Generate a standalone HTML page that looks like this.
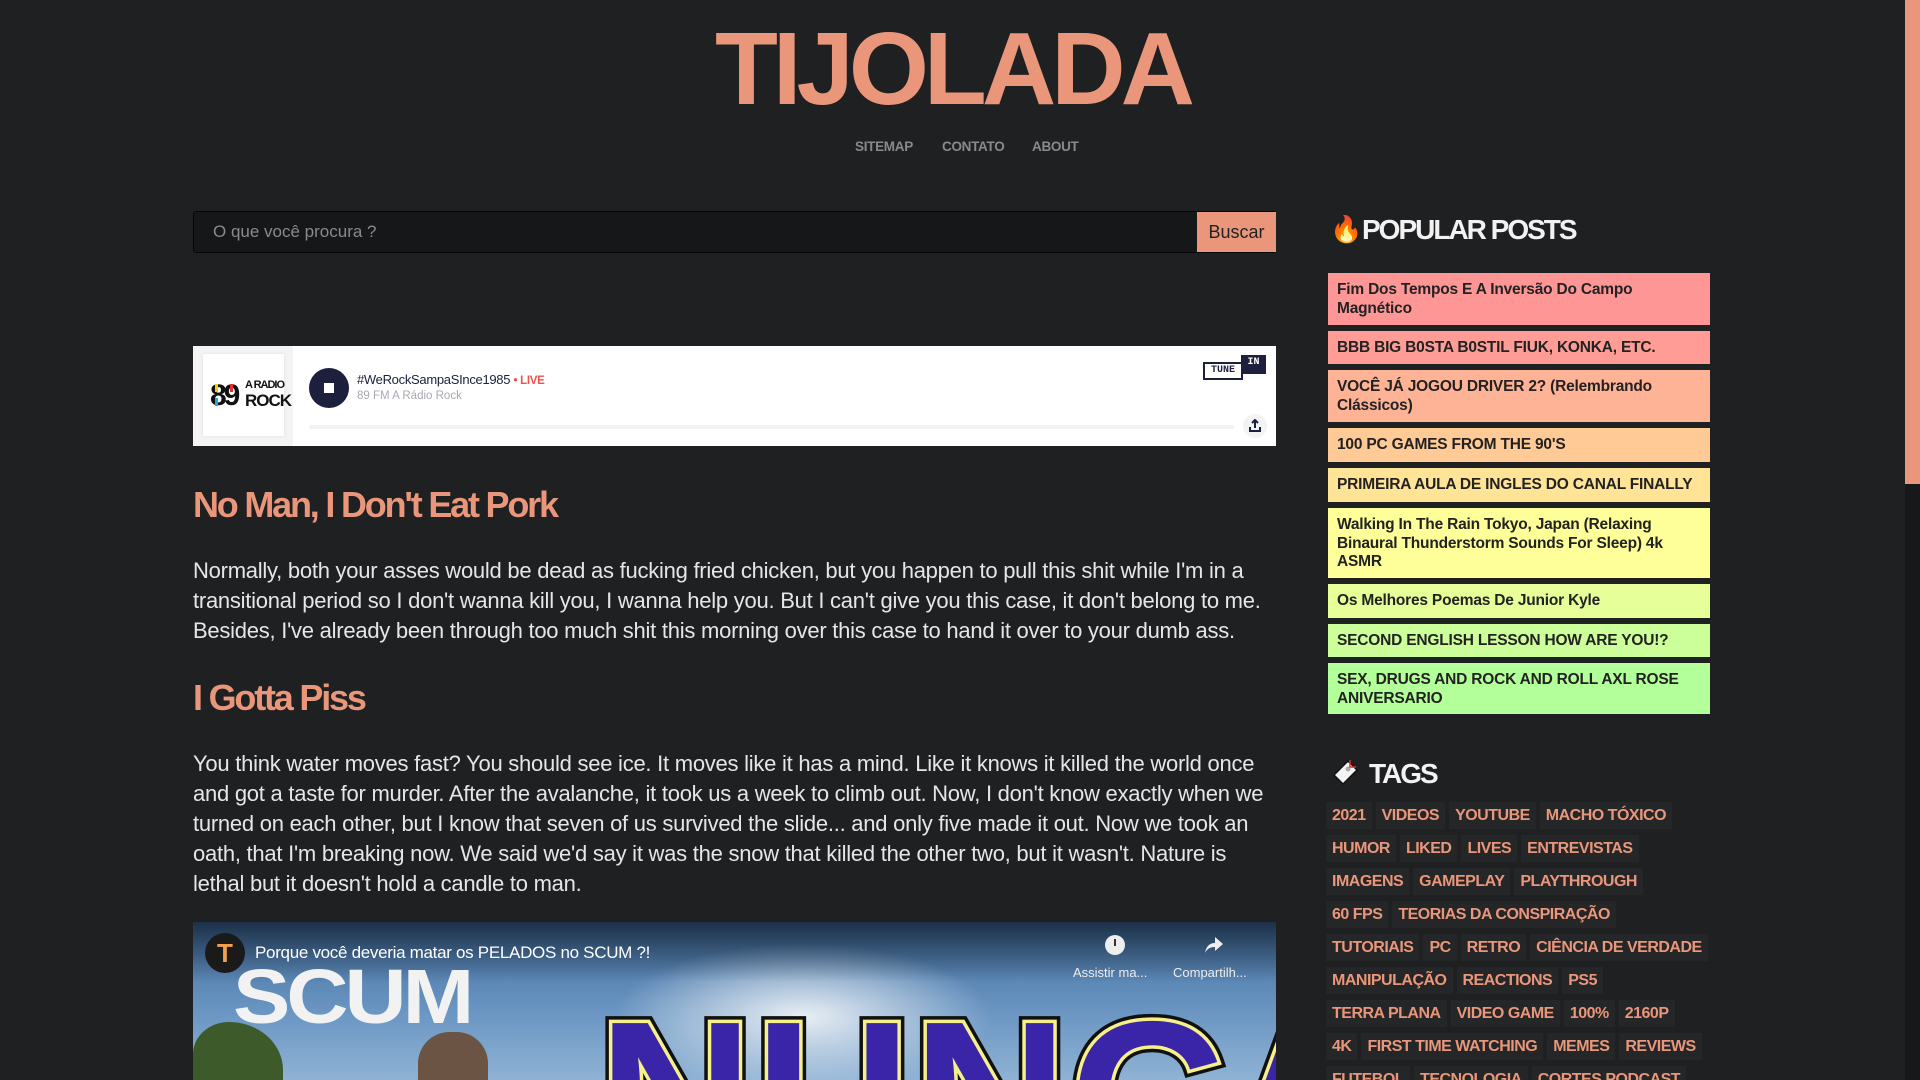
<!DOCTYPE html>
<html><head><meta charset="utf-8"><style>
*{margin:0;padding:0;box-sizing:border-box}
html,body{width:1920px;height:1080px;overflow:hidden;background:#1f2022;font-family:"Liberation Sans",sans-serif}
#wrap{position:relative;width:1920px;height:1080px;overflow:hidden}
.abs{position:absolute}
.logo{left:0;width:1905px;top:14px;text-align:center;font-size:103px;font-weight:bold;color:#e9967a;letter-spacing:-5px;line-height:110px}
.nav{top:139px;font-size:13.5px;font-weight:bold;color:#8a8a8a;letter-spacing:-0.3px}
.search{left:193px;top:211px;width:1083px;height:42px;background:#161719;border:1px solid #050505;border-radius:3px}
.search span{position:absolute;left:19px;top:10px;font-size:17px;color:#8a8a8a}
.btn{left:1197px;top:212px;width:79px;height:40px;background:#e9967a;color:#222;font-size:18px;text-align:center;line-height:40px}
.radio{left:193px;top:346px;width:1083px;height:100px;background:#fff}
h2{position:absolute;left:193px;font-size:36px;font-weight:bold;color:#e9967a;letter-spacing:-2.2px}
p.t{position:absolute;left:193px;font-size:22px;line-height:30px;color:#e6e6e6;white-space:nowrap;letter-spacing:-0.25px}
.side h3{position:absolute;font-size:28px;font-weight:bold;color:#f2f2f2;letter-spacing:-2px}
.pp{position:absolute;left:1328px;width:382px;padding:8px 9px;font-size:15.5px;font-weight:bold;line-height:18.5px;color:#222;letter-spacing:-0.2px}
.tags{position:absolute;left:1326px;top:802px;width:440px;white-space:nowrap;height:278px;overflow:hidden}
.tags span{display:inline-block;background:#252628;color:#e9967a;font-weight:bold;font-size:16px;height:27px;line-height:27px;padding:0 6px;margin:0 4px 6px 0;letter-spacing:-0.5px}
</style></head><body><div id="wrap">
<div class="abs logo">TIJOLADA</div>
<div class="abs nav" style="left:855px">SITEMAP</div>
<div class="abs nav" style="left:942px">CONTATO</div>
<div class="abs nav" style="left:1032px">ABOUT</div>
<div class="abs search"><span>O que você procura ?</span></div>
<div class="abs btn">Buscar</div>

<div class="abs radio">
 <div class="abs" style="left:0;top:0;width:100px;height:100px;background:#f3f4f3"></div>
 <div class="abs" style="left:10px;top:8px;width:81px;height:82px;background:#fff;box-shadow:0 0 3px #ddd"></div>
 <div class="abs" style="left:17px;top:33px;font:bold 30px/33px 'Liberation Sans';color:#111;letter-spacing:-3px">89</div>
 <div class="abs" style="left:22px;top:38px;width:3px;height:8px;background:#f5d000"></div>
 <div class="abs" style="left:22px;top:52px;width:3px;height:8px;background:#2aa4e0"></div>
 <div class="abs" style="left:37px;top:38px;width:3px;height:8px;background:#e03030"></div>
 <div class="abs" style="left:52px;top:32px;font:bold 11px/15px 'Liberation Sans';color:#111;letter-spacing:-1px">A RADIO<br><span style="font-size:17px">ROCK</span></div>
 <div class="abs" style="left:116px;top:22px;width:40px;height:40px;border-radius:50%;background:#1c203c"></div>
 <div class="abs" style="left:131px;top:37px;width:10px;height:10px;background:#fff"></div>
 <div class="abs" style="left:164px;top:26px;font-size:13px;color:#1c203c;letter-spacing:-0.3px">#WeRockSampaSInce1985 <span style="color:#f05050;font-weight:bold;font-size:11.5px">&bull; LIVE</span></div>
 <div class="abs" style="left:164px;top:44px;font-size:11.5px;color:#a8a8b0">89 FM A Rádio Rock</div>
 <div class="abs" style="left:116px;top:79px;width:925px;height:4px;background:#f1f2f1;border-radius:2px"></div>
 <div class="abs" style="left:1048px;top:9px;width:25px;height:19px;background:#1c203c;color:#fff;font:bold 10px/16px 'Liberation Mono';text-align:center">IN</div>
 <div class="abs" style="left:1010px;top:16px;width:40px;height:18px;border:2px solid #1c203c;background:#fff;color:#1c203c;font:bold 10px/14px 'Liberation Mono';text-align:center">TUNE</div>
 <div class="abs" style="left:1050px;top:68px;width:24px;height:24px;border-radius:50%;background:#f3f3f3"></div>
 <svg class="abs" style="left:1055px;top:73px" width="14" height="14" viewBox="0 0 14 14"><path d="M7 1v8M4 4l3-3 3 3M2 8v4h10V8" stroke="#1c203c" stroke-width="2" fill="none"/></svg>
</div>

<h2 style="top:484px">No Man, I Don't Eat Pork</h2>
<p class="t" style="top:556px">Normally, both your asses would be dead as fucking fried chicken, but you happen to pull this shit while I'm in a<br>transitional period so I don't wanna kill you, I wanna help you. But I can't give you this case, it don't belong to me.<br>Besides, I've already been through too much shit this morning over this case to hand it over to your dumb ass.</p>
<h2 style="top:677px">I Gotta Piss</h2>
<p class="t" style="top:749px">You think water moves fast? You should see ice. It moves like it has a mind. Like it knows it killed the world once<br>and got a taste for murder. After the avalanche, it took us a week to climb out. Now, I don't know exactly when we<br>turned on each other, but I know that seven of us survived the slide... and only five made it out. Now we took an<br>oath, that I'm breaking now. We said we'd say it was the snow that killed the other two, but it wasn't. Nature is<br>lethal but it doesn't hold a candle to man.</p>

<div class="abs" style="left:193px;top:922px;width:1083px;height:158px;overflow:hidden;background:linear-gradient(180deg,#3f6c9e 0%,#6d98c4 60%,#8fb2d4 100%)">
 <div class="abs" style="left:420px;top:20px;width:380px;height:150px;border-radius:50%;background:radial-gradient(#e8eef4,rgba(220,230,240,0) 70%)"></div>
 <div class="abs" style="left:0;top:0;width:1083px;height:60px;background:linear-gradient(rgba(0,0,0,.55),rgba(0,0,0,0))"></div>
 <div class="abs" style="left:0;top:100px;width:90px;height:80px;background:#3d5a2a;border-radius:40% 60% 0 0"></div>
 <div class="abs" style="left:40px;top:30px;font:bold 86px/90px 'Liberation Sans';color:#f2f2f2;letter-spacing:-4px;transform:scaleY(.9)">SCUM</div>
 <div class="abs" style="left:225px;top:110px;width:70px;height:70px;border-radius:45% 45% 0 0;background:#6b5443"></div>
 <div class="abs" style="left:405px;top:75px;font:bold 215px/200px 'Liberation Sans';color:#3a25a8;-webkit-text-stroke:14px #111;letter-spacing:2px">NUNCA</div>
 <div class="abs" style="left:405px;top:75px;font:bold 215px/200px 'Liberation Sans';color:#3a25a8;-webkit-text-stroke:7px #f5f08a;letter-spacing:2px">NUNCA</div>
 <div class="abs" style="left:405px;top:75px;font:bold 215px/200px 'Liberation Sans';color:#3a25a8;letter-spacing:2px">NUNCA</div>
 <div class="abs" style="left:12px;top:11px;width:40px;height:40px;border-radius:50%;background:#1a1a1a;color:#f0a050;font:bold 26px/40px 'Liberation Sans';text-align:center">T</div>
 <div class="abs" style="left:62px;top:21px;font-size:17px;color:#fff;letter-spacing:-0.3px">Porque você deveria matar os PELADOS no SCUM ?!</div>
 <div class="abs" style="left:912px;top:13px;width:20px;height:20px;border-radius:50%;background:#eee"></div>
 <div class="abs" style="left:921px;top:17px;width:2px;height:7px;background:#333"></div>
 <svg class="abs" style="left:1010px;top:13px" width="22" height="20" viewBox="0 0 22 20"><path d="M12 2l8 7-8 7v-4c-5 0-8 2-10 6 1-6 4-10 10-10z" fill="#eee"/></svg>
 <div class="abs" style="left:880px;top:43px;font-size:13px;color:#eee">Assistir ma...</div>
 <div class="abs" style="left:980px;top:43px;font-size:13px;color:#eee">Compartilh...</div>
</div>

<div class="side">
 <div class="abs" style="left:1330px;top:214px;font-size:26px;line-height:30px">🔥</div>
 <h3 style="left:1362px;top:214px">POPULAR POSTS</h3>
 <div class="pp" style="top:273px;height:52px;background:#ff9696">Fim Dos Tempos E A Inversão Do Campo<br>Magnético</div>
 <div class="pp" style="top:331px;height:33px;background:#ff9c96">BBB BIG B0STA B0STIL FIUK, KONKA, ETC.</div>
 <div class="pp" style="top:370px;height:52px;background:#ffb396">VOCÊ JÁ JOGOU DRIVER 2? (Relembrando<br>Clássicos)</div>
 <div class="pp" style="top:428px;height:34px;background:#ffca96">100 PC GAMES FROM THE 90'S</div>
 <div class="pp" style="top:468px;height:34px;background:#ffe396">PRIMEIRA AULA DE INGLES DO CANAL FINALLY</div>
 <div class="pp" style="top:508px;height:70px;background:#ffff99">Walking In The Rain Tokyo, Japan (Relaxing<br>Binaural Thunderstorm Sounds For Sleep) 4k<br>ASMR</div>
 <div class="pp" style="top:584px;height:34px;background:#e6ff99">Os Melhores Poemas De Junior Kyle</div>
 <div class="pp" style="top:624px;height:33px;background:#ccff99">SECOND ENGLISH LESSON HOW ARE YOU!?</div>
 <div class="pp" style="top:663px;height:51px;background:#b3ff99">SEX, DRUGS AND ROCK AND ROLL AXL ROSE<br>ANIVERSARIO</div>
 <svg class="abs" style="left:1330px;top:758px" width="30" height="30" viewBox="0 0 30 30"><path d="M18 3l9 9-14 14-9-9z" fill="#f4f4f4" stroke="#111" stroke-width="1.5"/><circle cx="18" cy="11" r="2.5" fill="#aaa"/><path d="M20 2v7h6" stroke="#e03030" stroke-width="1.5" fill="none"/></svg>
 <h3 style="left:1369px;top:758px">TAGS</h3>
 <div class="tags">
  <span>2021</span><span>VIDEOS</span><span>YOUTUBE</span><span>MACHO TÓXICO</span><br>
  <span>HUMOR</span><span>LIKED</span><span>LIVES</span><span>ENTREVISTAS</span><br>
  <span>IMAGENS</span><span>GAMEPLAY</span><span>PLAYTHROUGH</span><br>
  <span>60 FPS</span><span>TEORIAS DA CONSPIRAÇÃO</span><br>
  <span>TUTORIAIS</span><span>PC</span><span>RETRO</span><span>CIÊNCIA DE VERDADE</span><br>
  <span>MANIPULAÇÃO</span><span>REACTIONS</span><span>PS5</span><br>
  <span>TERRA PLANA</span><span>VIDEO GAME</span><span>100%</span><span>2160P</span><br>
  <span>4K</span><span>FIRST TIME WATCHING</span><span>MEMES</span><span>REVIEWS</span><br>
  <span>FUTEBOL</span><span>TECNOLOGIA</span><span>CORTES PODCAST</span>
 </div>
</div>

<div class="abs" style="left:1905px;top:0;width:15px;height:1080px;background:#171819"></div>
<div class="abs" style="left:1905px;top:0;width:15px;height:484px;background:#e9967a"></div>
</div></body></html>
